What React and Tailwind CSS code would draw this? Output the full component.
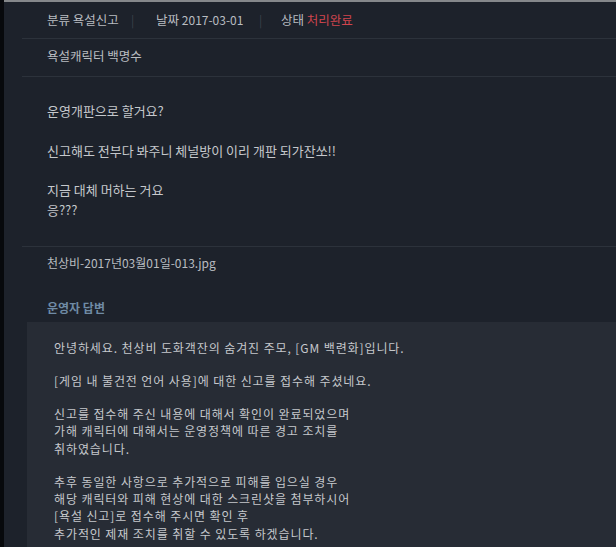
import React from "react";

const font = { fontFamily: '"Noto Sans CJK KR", "Noto Sans", sans-serif' };

export default function App() {
  const answer = [
    "안녕하세요. 천상비 도화객잔의 숨겨진 주모, [GM 백련화]입니다.",
    "",
    "[게임 내 불건전 언어 사용]에 대한 신고를 접수해 주셨네요.",
    "",
    "신고를 접수해 주신 내용에 대해서 확인이 완료되었으며",
    "가해 캐릭터에 대해서는 운영정책에 따른 경고 조치를",
    "취하였습니다.",
    "",
    "추후 동일한 사항으로 추가적으로 피해를 입으실 경우",
    "해당 캐릭터와 피해 현상에 대한 스크린샷을 첨부하시어",
    "[욕설 신고]로 접수해 주시면 확인 후",
    "추가적인 제재 조치를 취할 수 있도록 하겠습니다.",
  ];
  return (
    <div
      className="flex h-[547px] w-[616px] overflow-hidden bg-[#1d222b] text-[13px] text-[#c5c8cc]"
      style={font}
    >
      <div className="w-[4px] shrink-0 bg-[#07090c]" />
      <div className="flex-1 border-t-2 border-[#85888b] pl-[18px]">
        <div className="flex h-[37px] items-center border-b border-[#2c323b] pl-[25px] text-[12.5px] leading-[20px] text-[#b9bdc1]">
          <span className="w-[84px]">분류 욕설신고</span>
          <span className="w-[25px] text-[12px] text-[#3b414a]">|</span>
          <span className="w-[103px]">
            날짜 <span className="text-[12px]">2017-03-01</span>
          </span>
          <span className="w-[22px] text-[12px] text-[#3b414a]">|</span>
          <span>
            상태 <span className="text-[#d0454e]">처리완료</span>
          </span>
        </div>
        <div className="flex h-[38px] items-center border-b border-[#2c323b] pb-[4px] pl-[25px] text-[12.5px] leading-[20px] text-[#b9bdc1]">
          욕설캐릭터 백명수
        </div>
        <div className="border-b border-[#2c323b] pb-[26px] pl-[25px] pt-[24px] leading-[20px]">
          <p>운영개판으로 할거요?</p>
          <p className="h-[20px]" />
          <p>신고해도 전부다 봐주니 체널방이 이리 개판 되가잔쏘!!</p>
          <p className="h-[19px]" />
          <p>지금 대체 머하는 거요</p>
          <p>응???</p>
        </div>
        <div className="pl-[25px] pt-[6px] text-[12px] leading-[20px] text-[#b9bdc1]">
          천상비-2017년03월01일-013.jpg
        </div>
        <div className="mt-[25px] pl-[25px] text-[12px] font-bold leading-[20px] text-[#6f8ba5]">
          운영자 답변
        </div>
        <div className="ml-[5px] mt-[4px] bg-[#272c35] pb-[10px] pl-[27px] pt-[17px] text-[12px] leading-[17.4px] tracking-[0.9px]">
          {answer.map((l, i) =>
            l ? <p key={i}>{l}</p> : <p key={i} className="h-[15.5px]" />
          )}
        </div>
      </div>
    </div>
  );
}
